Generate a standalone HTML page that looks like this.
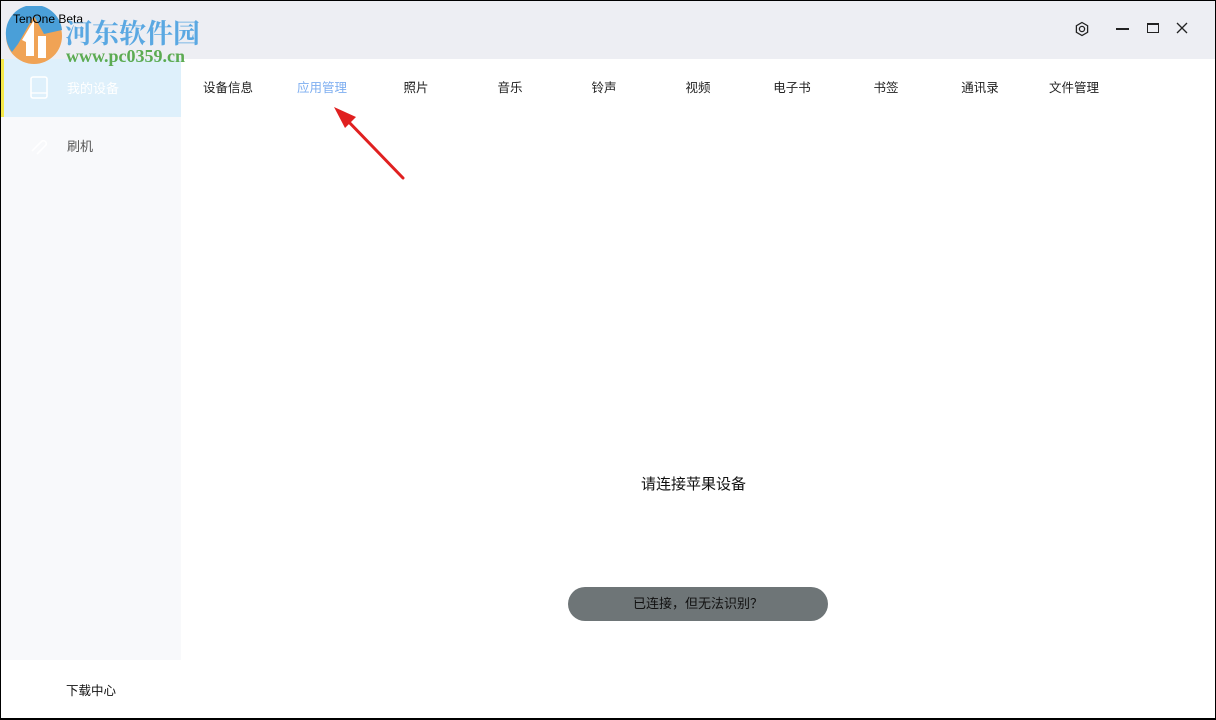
<!DOCTYPE html>
<html><head><meta charset="utf-8"><style>
*{margin:0;padding:0;box-sizing:border-box}
body{width:1216px;height:720px;overflow:hidden;background:#fff;font-family:"Liberation Sans","Noto Sans CJK SC",sans-serif;position:relative}
.frame{position:absolute;left:0;top:0;width:1216px;height:720px;border:1px solid #000;border-bottom-width:2px;pointer-events:none;z-index:10}
.title{position:absolute;left:0;top:0;width:1216px;height:59px;background:#edeef3}
.side{position:absolute;left:0;top:59px;width:181px;height:601px;background:#f8f9fb}
.sel{position:absolute;left:0;top:59px;width:181px;height:58px;background:#def0fb;border-left:4px solid #f5e94a}
.t{position:absolute;font-size:13px;color:#222;white-space:nowrap}
.tab{position:absolute;top:77px;font-size:12.5px;color:#222;width:80px;text-align:center}
</style></head><body>
<div class="title"></div>
<div class="side"></div>
<div class="sel"></div>
<!-- watermark logo -->
<svg style="position:absolute;left:4px;top:6px" width="60" height="60" viewBox="0 0 60 60">
<circle cx="30" cy="30" r="28" fill="#f0a355"/>
<path d="M2 30 A28 28 0 0 1 58 24 L40 28 L30 10 L14 38 L8 46 A28 28 0 0 1 2 30Z" fill="#4a9fd8"/>
<path d="M18 34 L30 14 L30 50 L22 50 L22 36Z" fill="#fff"/>
<rect x="34" y="30" width="8" height="22" fill="#fff"/>
</svg>
<div class="t" style="left:13px;top:12px;font-size:12px;color:#000;z-index:3">TenOne Beta</div>
<div class="t" style="left:65px;top:12px;font-family:'Liberation Serif','Noto Serif CJK SC',serif;font-weight:bold;font-size:27px;color:#5aa8e2;z-index:4">河东软件园</div>
<div class="t" style="left:66px;top:46px;font-family:'Liberation Serif',serif;font-weight:bold;font-size:18px;color:#5cab52">www.pc0359.cn</div>
<!-- window controls -->
<svg style="position:absolute;left:1074px;top:21px" width="16" height="16" viewBox="0 0 16 16"><path d="M8 1.5 L13.6 4.75 L13.6 11.25 L8 14.5 L2.4 11.25 L2.4 4.75Z" fill="none" stroke="#222" stroke-width="1.3"/><circle cx="8" cy="8" r="2.6" fill="none" stroke="#222" stroke-width="1.3"/></svg>
<div style="position:absolute;left:1116px;top:28px;width:13px;height:1.5px;background:#222"></div>
<div style="position:absolute;left:1147px;top:23px;width:12px;height:10px;border:1.5px solid #222;border-top-width:2.5px"></div>
<svg style="position:absolute;left:1176px;top:22px" width="12" height="12"><path d="M1 1L11 11M11 1L1 11" stroke="#222" stroke-width="1.3"/></svg>
<!-- sidebar -->
<svg style="position:absolute;left:30px;top:76px" width="18" height="23" viewBox="0 0 18 23"><rect x="1" y="1" width="16" height="21" rx="2" fill="none" stroke="#fff" stroke-width="1.6"/><line x1="1" y1="17" x2="17" y2="17" stroke="#fff" stroke-width="1.3"/></svg>
<div class="t" style="left:67px;top:78px;color:#fff">我的设备</div>
<svg style="position:absolute;left:28px;top:137px" width="22" height="18"><path d="M4 14 L14 4 a3 3 0 0 1 4 4 L9 17" fill="none" stroke="#fff" stroke-width="1.6"/></svg>
<div class="t" style="left:67px;top:136px;color:#555">刷机</div>
<div class="t" style="left:66px;top:680px;color:#111;font-size:12.5px">下载中心</div>
<!-- tabs -->
<div class="tab" style="left:188px">设备信息</div>
<div class="tab" style="left:282px;color:#7eaef0">应用管理</div>
<div class="tab" style="left:376px">照片</div>
<div class="tab" style="left:470px">音乐</div>
<div class="tab" style="left:564px">铃声</div>
<div class="tab" style="left:658px">视频</div>
<div class="tab" style="left:752px">电子书</div>
<div class="tab" style="left:846px">书签</div>
<div class="tab" style="left:940px">通讯录</div>
<div class="tab" style="left:1034px">文件管理</div>
<!-- arrow -->
<svg style="position:absolute;left:320px;top:95px" width="100" height="95"><line x1="83" y1="83" x2="25" y2="23" stroke="#e02020" stroke-width="3" stroke-linecap="round"/><path d="M14 12 L36 22 L25 33Z" fill="#e02020"/></svg>
<div class="t" style="left:641px;top:473px;font-size:15px;color:#111">请连接苹果设备</div>
<div style="position:absolute;left:568px;top:587px;width:260px;height:34px;border-radius:17px;background:#6e7577;color:#111;font-size:13px;text-align:center;line-height:34px">已连接，但无法识别？</div>
<div class="frame"></div>
</body></html>
